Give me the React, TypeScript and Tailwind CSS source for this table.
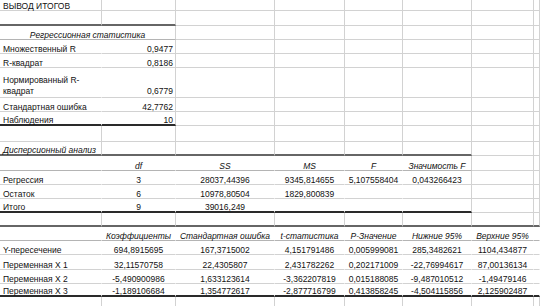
import type { ReactNode } from "react";

// Excel-style regression output sheet ("ВЫВОД ИТОГОВ").

type Align = "l" | "c" | "r";
type Bottom = "g" | "h" | "top" | "bot";

type CellSpec = {
  t?: ReactNode;
  a?: Align;
  i?: boolean;
  noR?: boolean;
  b?: Bottom;
  span2?: boolean;
  wrap?: boolean;
};

const COLS = "grid grid-cols-[102px_74px_99px_70px_58px_69px_62px_1fr]";

const alignCls: Record<Align, string> = {
  l: "justify-start pl-[3px]",
  c: "justify-center",
  r: "justify-end pr-[2px]",
};

const bottomCls: Record<Bottom, string> = {
  g: "border-b border-b-[#d2d2d2]",
  h: "border-b border-b-[#b4b4b4]",
  top: "border-b-2 border-b-[#666666]",
  bot: "border-b-2 border-b-[#2a2a2a]",
};

function Cell({ t, a = "l", i, noR, b = "g", span2, wrap }: CellSpec) {
  return (
    <div
      className={[
        "flex items-end border-r",
        noR ? "border-r-transparent" : "border-r-[#d2d2d2]",
        bottomCls[b],
        alignCls[a],
        i ? "italic" : "",
        span2 ? "col-span-2" : "",
        wrap ? "whitespace-normal leading-[11px]" : "whitespace-nowrap leading-[8px]",
      ].join(" ")}
    >
      {t}
    </div>
  );
}

function Row({ h, cells }: { h: string; cells: CellSpec[] }) {
  const filled = [...cells];
  const count = cells.reduce((n, c) => n + (c.span2 ? 2 : 1), 0);
  for (let k = count; k < 8; k++) filled.push({});
  return (
    <div className={`${COLS} ${h}`}>
      {filled.map((c, idx) => (
        <Cell key={idx} {...c} />
      ))}
    </div>
  );
}

// regression statistics rows
const stats: [ReactNode, string][] = [
  ["Множественный R", "0,9477"],
  ["R-квадрат", "0,8186"],
];

const anova = [
  ["Регрессия", "3", "28037,44396", "9345,814655", "5,107558404", "0,043266423"],
  ["Остаток", "6", "10978,80504", "1829,800839", "", ""],
  ["Итого", "9", "39016,249", "", "", ""],
];

const coefs = [
  ["Y-пересечение", "694,8915695", "167,3715002", "4,151791486", "0,005999081", "285,3482621", "1104,434877"],
  ["Переменная X 1", "32,11570758", "22,4305807", "2,431782262", "0,202171009", "-22,76994617", "87,00136134"],
  ["Переменная X 2", "-5,490900986", "1,633123614", "-3,362207819", "0,015188085", "-9,487010512", "-1,49479146"],
  ["Переменная X 3", "-1,189106684", "1,354772617", "-2,877716799", "0,413858245", "-4,504115856", "2,125902487"],
];

const anovaHead = ["df", "SS", "MS", "F", "Значимость F"];
const coefHead = ["Коэффициенты", "Стандартная ошибка", "t-статистика", "P-Значение", "Нижние 95%", "Верхние 95%"];

export default function App() {
  return (
    <div className="h-[306px] w-[540px] overflow-hidden bg-white font-['Liberation_Sans',Arial,sans-serif] text-[8.5px] text-[#111111]">
      <Row h="h-[11px]" cells={[{ t: "ВЫВОД ИТОГОВ" }]} />
      <Row h="h-[15px]" cells={[{ b: "top" }, { b: "top" }]} />
      <Row h="h-[14px]" cells={[{ t: "Регрессионная статистика", a: "c", i: true, b: "h", span2: true }]} />
      {stats.map(([l, v]) => (
        <Row key={String(l)} h="h-[14px]" cells={[{ t: l, noR: true }, { t: v, a: "r" }]} />
      ))}
      <Row
        h="h-[30px]"
        cells={[
          { t: "Нормированный R-квадрат", noR: true, wrap: true },
          { t: "0,6779", a: "r", wrap: true },
        ]}
      />
      <Row h="h-[14px]" cells={[{ t: "Стандартная ошибка", noR: true }, { t: "42,7762", a: "r" }]} />
      <Row h="h-[14px]" cells={[{ t: "Наблюдения", noR: true, b: "bot" }, { t: "10", a: "r", b: "bot" }]} />
      <Row h="h-[16px]" cells={[]} />
      <Row
        h="h-[14px]"
        cells={[
          { t: "Дисперсионный анализ", i: true, b: "top" },
          { b: "top" },
          { b: "top" },
          { b: "top" },
          { b: "top" },
          { b: "top" },
        ]}
      />
      <Row
        h="h-[15px]"
        cells={[
          { noR: true, b: "h" },
          ...anovaHead.map((t, k) => ({ t, a: "c" as Align, i: true, noR: k < 4, b: "h" as Bottom })),
        ]}
      />
      {anova.map((r, ri) => (
        <Row
          key={r[0]}
          h="h-[14px]"
          cells={r.map((t, k) => ({
            t,
            a: (k === 0 ? "l" : "c") as Align,
            noR: k < 5,
            b: (ri === anova.length - 1 ? "bot" : "g") as Bottom,
          }))}
        />
      ))}
      <Row h="h-[14px]" cells={Array.from({ length: 8 }, () => ({ b: "top" as Bottom }))} />
      <Row
        h="h-[14px]"
        cells={[
          { noR: true, b: "h" },
          ...coefHead.map((t) => ({ t, a: "c" as Align, i: true, noR: true, b: "h" as Bottom })),
          { noR: true, b: "h" },
        ]}
      />
      {coefs.map((r, ri) => (
        <Row
          key={r[0]}
          h={ri === 1 ? "h-[15px]" : ri === 3 ? "h-[13px]" : "h-[14px]"}
          cells={[
            ...r.map((t, k) => ({
              t,
              a: (k === 0 ? "l" : "c") as Align,
              noR: true,
              b: (ri === coefs.length - 1 ? "bot" : "g") as Bottom,
            })),
            { noR: true, b: (ri === coefs.length - 1 ? "bot" : "g") as Bottom },
          ]}
        />
      ))}
      <Row h="h-[14px]" cells={[]} />
    </div>
  );
}
